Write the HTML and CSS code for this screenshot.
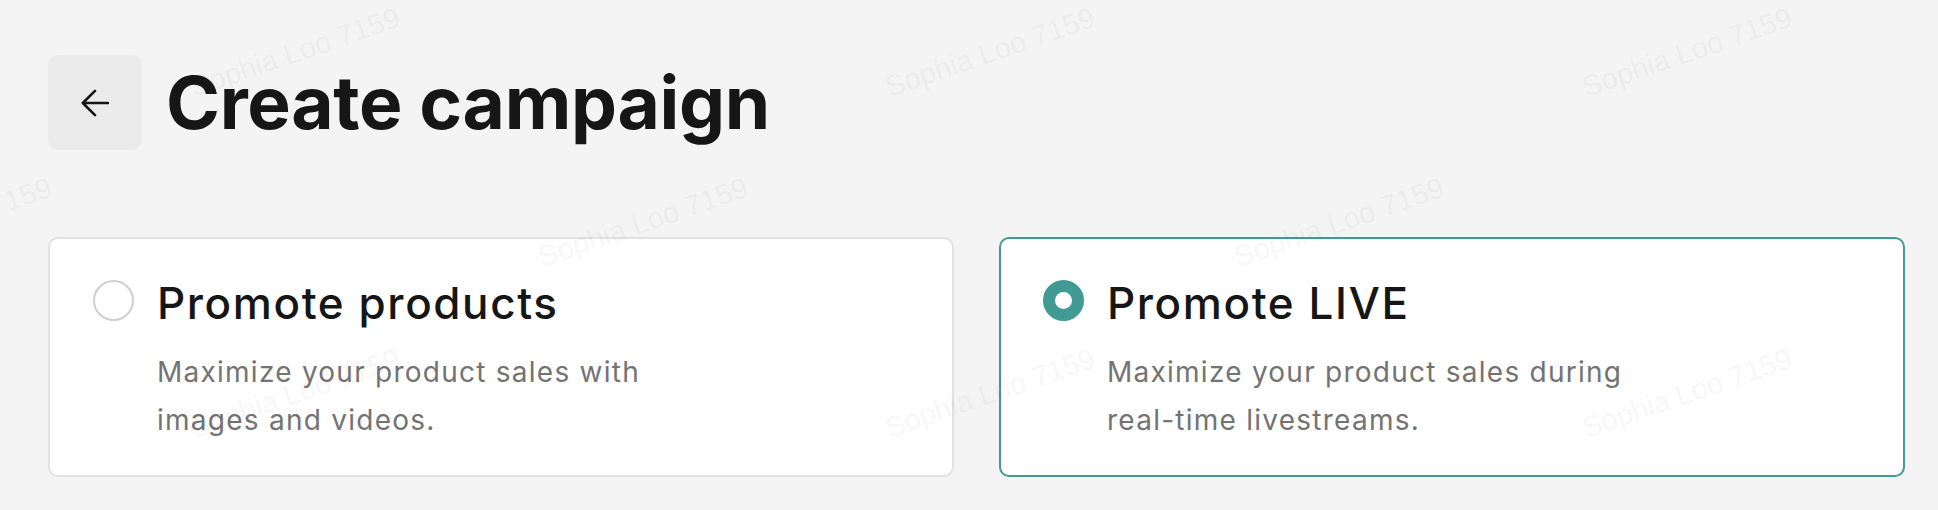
FILE: index.html
```html
<!DOCTYPE html>
<html lang="en">
<head>
<meta charset="utf-8">
<title>Create campaign</title>
<link rel="stylesheet" href="styles.css">
</head>
<body>
<div class="page">
  <header class="header">
    <button class="back" type="button" aria-label="Back">
      <svg width="28" height="28" viewBox="0 0 28 28" fill="none" stroke="#161616" stroke-width="2.6" stroke-linecap="round" stroke-linejoin="round"><path d="M27 14H1.8M14 1.8L1.8 14L14 26.2"/></svg>
    </button>
    <h1 class="title">Create campaign</h1>
  </header>

  <div class="cards">
    <label class="card">
      <span class="radio"></span>
      <span class="card-body">
        <span class="card-title">Promote products</span>
        <span class="card-desc">Maximize your product sales with images and videos.</span>
      </span>
    </label>
    <label class="card card-selected">
      <span class="radio radio-on"></span>
      <span class="card-body">
        <span class="card-title">Promote LIVE</span>
        <span class="card-desc">Maximize your product sales during real-time livestreams.</span>
      </span>
    </label>
  </div>
</div>

<div class="watermarks" aria-hidden="true">
  <span class="wm wm-a1">Sophia Loo 7159</span>
  <span class="wm wm-a2">Sophia Loo 7159</span>
  <span class="wm wm-a3">Sophia Loo 7159</span>
  <span class="wm wm-b0">Sophia Loo 7159</span>
  <span class="wm wm-b1">Sophia Loo 7159</span>
  <span class="wm wm-b2">Sophia Loo 7159</span>
  <span class="wm wm-c1">Sophia Loo 7159</span>
  <span class="wm wm-c2">Sophia Loo 7159</span>
  <span class="wm wm-c3">Sophia Loo 7159</span>
</div>
</body>
</html>
```

FILE: styles.css
```css
* { box-sizing: border-box; }

html, body {
  margin: 0;
  padding: 0;
}

body {
  background: #f4f4f4;
  font-family: Inter, "Noto Sans", "Liberation Sans", sans-serif;
  color: #161616;
  width: 1938px;
  height: 510px;
  overflow: hidden;
  position: relative;
}

.page {
  padding: 55px 34px 0 48px;
}

.header {
  display: flex;
  align-items: center;
  gap: 24px;
}

.back {
  width: 94px;
  height: 95px;
  border: none;
  border-radius: 10px;
  background: #ebebeb;
  display: flex;
  align-items: center;
  justify-content: center;
  padding: 0;
  margin: 0;
}

.title {
  margin: 0;
  font-size: 73px;
  font-weight: 700;
  line-height: 95px;
  letter-spacing: -0.3px;
  color: #161616;
}

.cards {
  margin-top: 87px;
  display: grid;
  grid-template-columns: 906px 906px;
  gap: 45px;
}

.card {
  display: flex;
  align-items: flex-start;
  gap: 23px;
  height: 240px;
  padding: 41px 42px 0 43px;
  background: #ffffff;
  border: 2px solid #e2e2e2;
  border-radius: 10px;
}

.card-selected {
  border-color: #429a94;
  padding-left: 42px;
}

.radio {
  flex: none;
  width: 41px;
  height: 41px;
  border-radius: 50%;
  border: 2.5px solid #cfcfcf;
  background: #fff;
}

.radio-on {
  border: 12px solid #429a94;
  background: #fff;
}

.card-body {
  display: flex;
  flex-direction: column;
}

.card-title {
  font-size: 44px;
  line-height: 46px;
  font-weight: 500;
  letter-spacing: 1.6px;
  color: #161616;
}

.card-desc {
  margin-top: 22px;
  max-width: 560px;
  font-size: 28px;
  line-height: 48px;
  letter-spacing: 1.25px;
  color: #737373;
}

.watermarks {
  position: absolute;
  inset: 0;
  pointer-events: none;
}

.wm {
  position: absolute;
  width: 240px;
  margin-left: -120px;
  margin-top: -17px;
  text-align: center;
  font-family: "Liberation Sans", Arial, sans-serif;
  font-size: 29px;
  line-height: 34px;
  color: rgba(0, 0, 0, 0.055);
  transform: rotate(-19deg);
  white-space: nowrap;
}

.wm-a1 { left: 295px; top: 52px; }
.wm-a2 { left: 990px; top: 52px; }
.wm-a3 { left: 1687px; top: 52px; }
.wm-b0 { left: -53px; top: 222px; }
.wm-b1 { left: 643px; top: 222px; }
.wm-b2 { left: 1339px; top: 222px; }
.wm-c1 { left: 295px; top: 393px; }
.wm-c2 { left: 990px; top: 393px; }
.wm-c3 { left: 1687px; top: 393px; }
```
